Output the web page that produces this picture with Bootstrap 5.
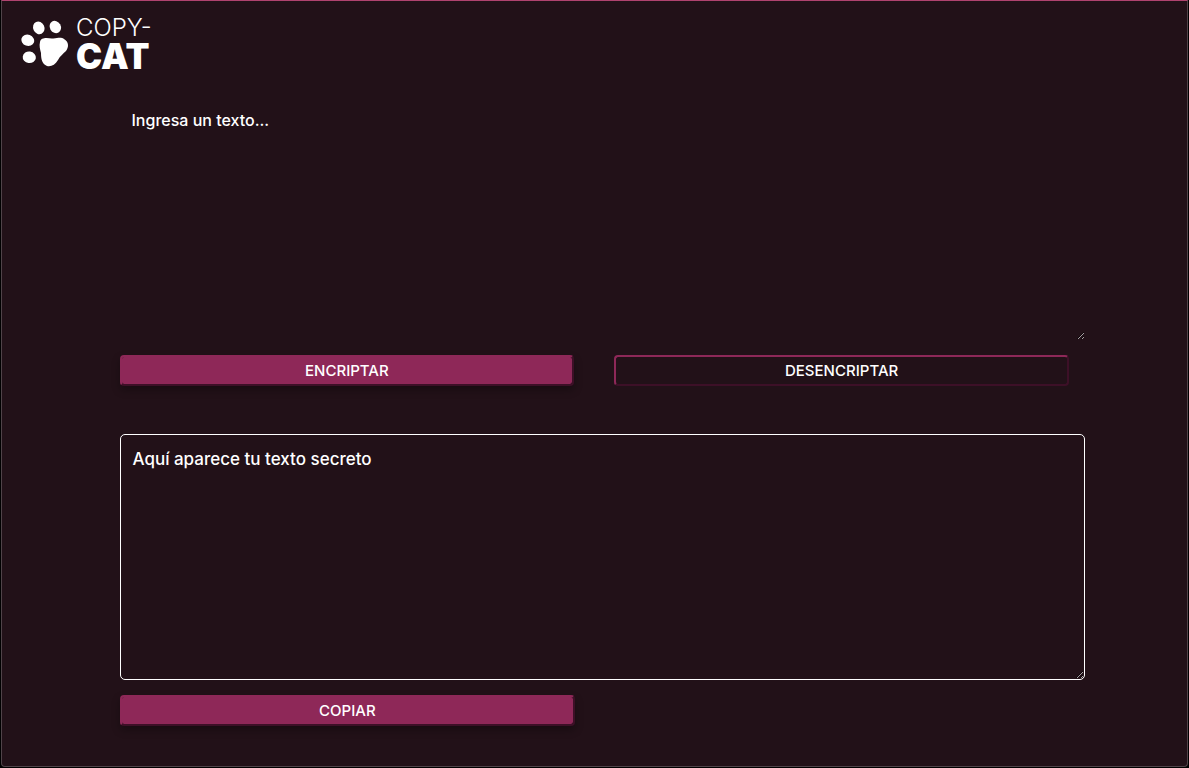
<!DOCTYPE html>
<html lang="es">
<head>
<meta charset="utf-8">
<meta name="viewport" content="width=device-width, initial-scale=1">
<title>Copy-Cat</title>
<link href="https://cdn.jsdelivr.net/npm/bootstrap@5.3.0/dist/css/bootstrap.min.css" rel="stylesheet">
<style>
body { background: #000; color: #fff; font-family: Inter, "Open Sans", sans-serif; }
.app-frame { background: #221118; border: 1px solid #504449; border-top-color: #b0436f; border-radius: 0 0 4px 4px; margin: 0 1px 1px; }
.brand { color: #fff; padding: 17px 18px 0; gap: 7px; }
.brand:hover { color: #fff; }
.brand-top { font-size: 24px; line-height: 20px; font-weight: 300; }
.brand-bottom { font-size: 35px; line-height: 36px; font-weight: 900; }
.tool-area { padding: 22px 102px 40px calc(10% - 1px); }
.text-area, .text-area:focus { height: 244px; padding: 12px; background: transparent; color: #fff; font-weight: 500; border-radius: 5px; resize: vertical; box-shadow: none; }
.text-area::placeholder { color: #fff; opacity: 1; }
.result-area, .result-area:focus { height: 246px; border: 1px solid #fff; font-size: 17px; line-height: 24px; }
.actions { column-gap: 40px; padding: 15px 16px 0 0; }
.action { height: 31px; padding: 0; border: 2px solid; border-color: #8e2858 #3d1027 #3d1027 #8e2858; border-radius: 4px; background: transparent; color: #fff; font-size: 15px; line-height: 24px; font-weight: 500; }
.action-main { background: #8e2858; background-clip: padding-box; box-shadow: 0 4px 8px rgba(0, 0, 0, .3); }
.result { margin-top: 48px; }
</style>
</head>
<body>
<div class="app-frame">
  <header class="d-flex">
    <a href="#" class="brand d-flex align-items-start text-decoration-none">
      <svg width="49" height="52" viewBox="0 0 49 52" fill="#fff" aria-hidden="true">
        <ellipse cx="18.8" cy="9.8" rx="5.6" ry="6.5" transform="rotate(-25 18.8 9.8)"/>
        <ellipse cx="35.3" cy="9" rx="5.5" ry="6.4" transform="rotate(-30 35.3 9)"/>
        <ellipse cx="7.8" cy="22.3" rx="6.5" ry="5.6" transform="rotate(20 7.8 22.3)"/>
        <ellipse cx="9.3" cy="39.3" rx="6.6" ry="5.8" transform="rotate(8 9.3 39.3)"/>
        <path d="M20 24C21 19 27 20 32 20.5C37 21 40 18.5 44 21C49 24 49 29 46 33C43 36 40 38 38 42C35 47 31 49 27 48C22 46 21 41 21 35C20 31 19 28 20 24Z"/>
      </svg>
      <span class="d-flex flex-column">
        <span class="brand-top">COPY-</span>
        <span class="brand-bottom">CAT</span>
      </span>
    </a>
  </header>
  <main class="tool-area">
    <section>
      <textarea class="form-control text-area border-0" aria-label="Texto original" placeholder="Ingresa un texto..."></textarea>
      <div class="actions d-flex">
        <button type="button" class="action action-main w-100">ENCRIPTAR</button>
        <button type="button" class="action w-100">DESENCRIPTAR</button>
      </div>
    </section>
    <section class="result">
      <textarea class="form-control text-area result-area" aria-label="Texto secreto" placeholder="Aquí aparece tu texto secreto"></textarea>
      <div class="actions d-flex">
        <button type="button" class="action action-main w-100">COPIAR</button>
        <span class="w-100"></span>
      </div>
    </section>
  </main>
</div>
</body>
</html>
